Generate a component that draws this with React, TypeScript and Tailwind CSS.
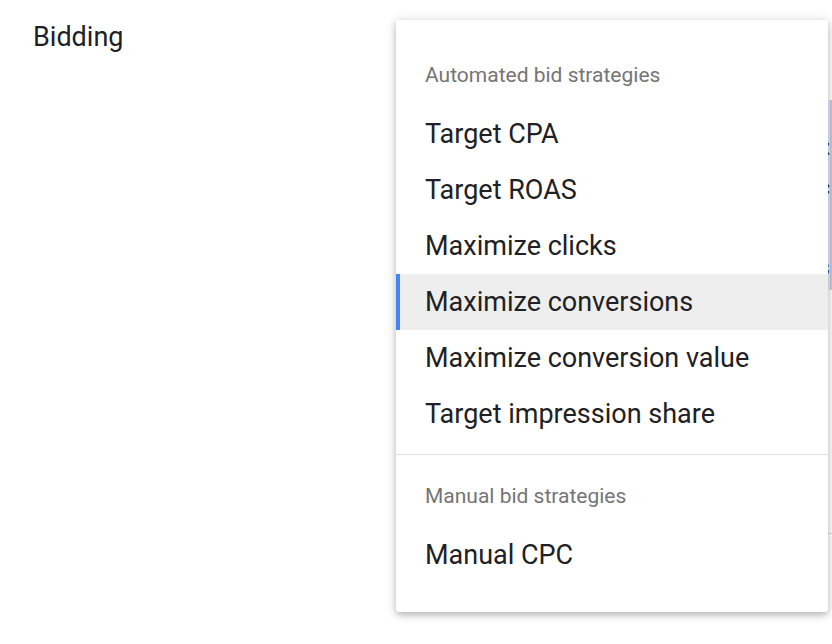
import React from 'react';

const automated = [
  'Target CPA',
  'Target ROAS',
  'Maximize clicks',
  'Maximize conversions',
  'Maximize conversion value',
  'Target impression share',
];

const manual = ['Manual CPC'];

function MenuItem({ label, active }: { label: string; active?: boolean }) {
  return (
    <div
      className={`relative flex h-[56px] items-center pl-[29px] text-[27px] text-[#202124] ${
        active ? 'bg-[#eeeeee]' : ''
      }`}
    >
      {active && <span className="absolute left-0 top-0 h-full w-[4px] bg-[#4285f4]" />}
      {label}
    </div>
  );
}

function GroupHeader({ label }: { label: string }) {
  return (
    <div className="flex h-[56px] items-center pl-[29px] text-[21px] text-[#757575]">{label}</div>
  );
}

export default function App() {
  return (
    <div
      className="relative h-[644px] w-[832px] overflow-hidden bg-white"
      style={{ fontFamily: 'Roboto, "Noto Sans", sans-serif' }}
    >
      <div className="flex">
        <div className="w-[800px] pl-[33px] pt-[19px] text-[27px] leading-[36px] text-[#202124]">Bidding</div>
        {/* content peeking out behind the menu */}
        <div className="flex-1 pt-[100px]">
          <div className="h-[190px] border-r-[2px] border-[#c5cae9] bg-[#e8eaf6] pl-[29px] text-[22px] leading-[40px] text-[#202124]">
            <div className="pt-[28px] font-bold">z</div>
            <div>c</div>
            <div>-</div>
            <div>s</div>
          </div>
          <div className="mt-[243px] h-[1px] bg-[#dadce0]" />
        </div>
      </div>

      <div className="absolute left-[396px] top-[20px] w-[432px] rounded-[3px] bg-white pb-[29px] pt-[28px] shadow-[0_3px_6px_rgba(0,0,0,0.22),0_1px_14px_rgba(0,0,0,0.12)]">
        <GroupHeader label="Automated bid strategies" />
        <div className="pt-[2px] pb-[12px]">
          {automated.map((label) => (
            <MenuItem key={label} label={label} active={label === 'Maximize conversions'} />
          ))}
        </div>
        <div className="h-[1px] bg-[#e0e0e0]" />
        <div className="pt-[14px]">
          <GroupHeader label="Manual bid strategies" />
          <div className="pt-[2px]">
            {manual.map((label) => (
              <MenuItem key={label} label={label} />
            ))}
          </div>
        </div>
      </div>
    </div>
  );
}
